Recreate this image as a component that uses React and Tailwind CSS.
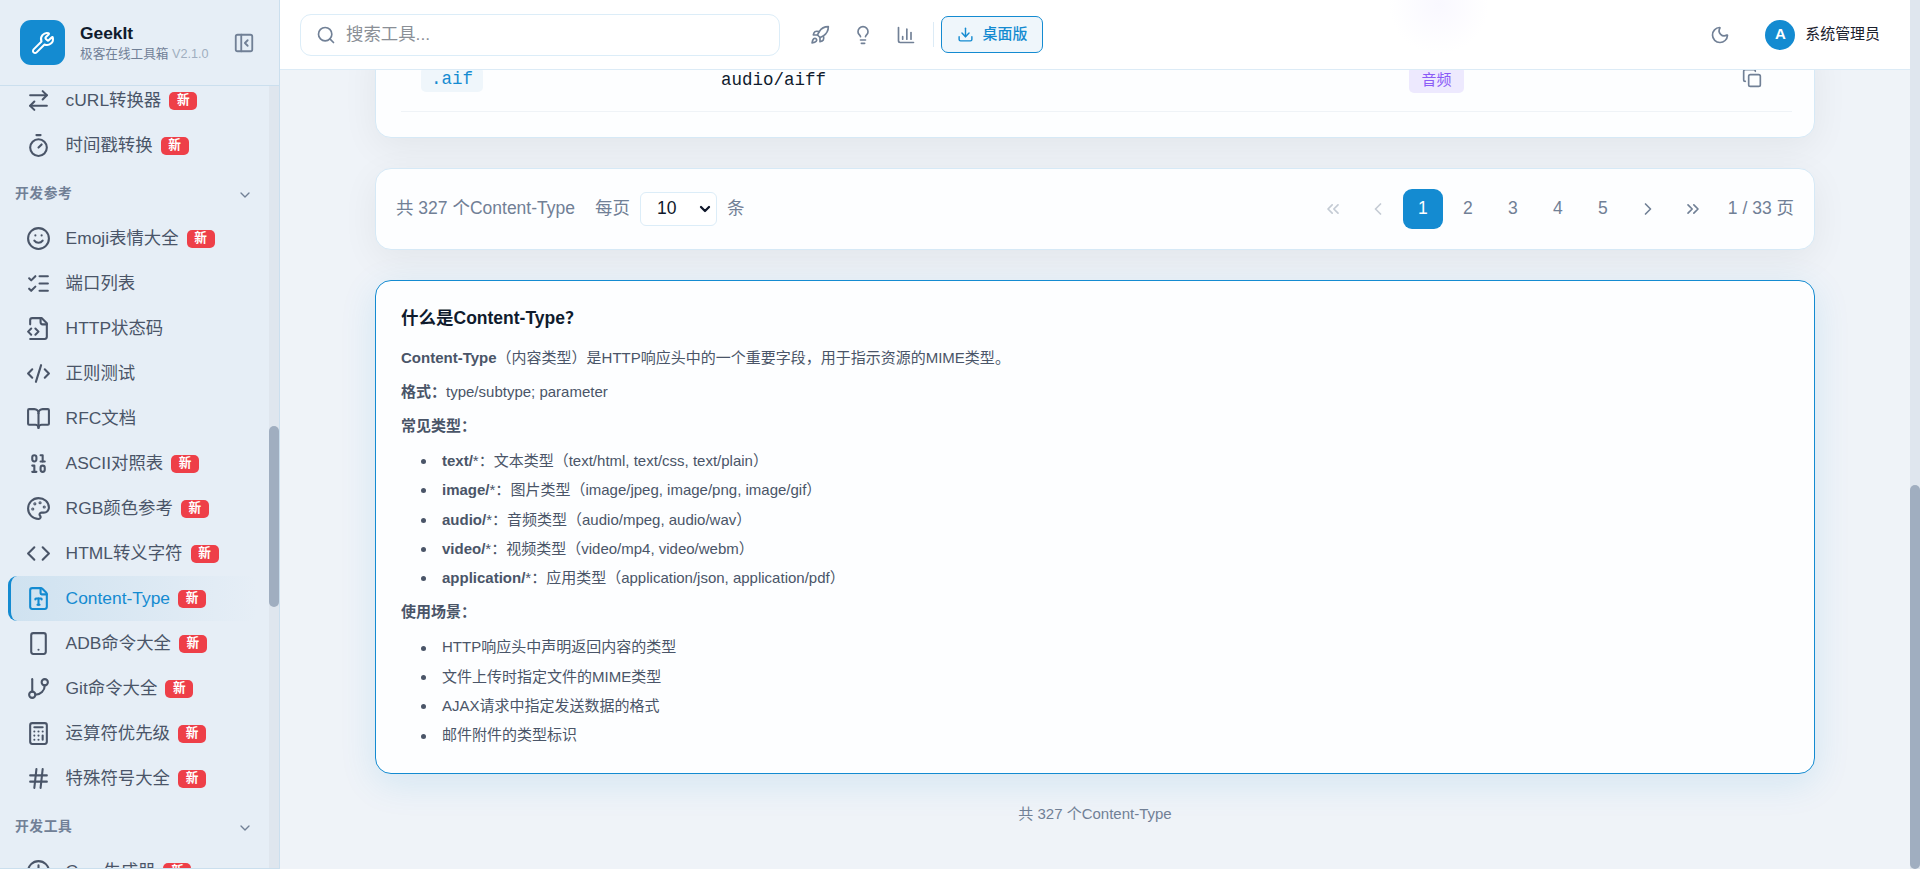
import React from 'react';
import {
    ArrowRightLeft,
    Binary,
    BookOpen,
    Calculator,
    ChartColumn,
    ChevronDown,
    ChevronLeft,
    ChevronRight,
    ChevronsLeft,
    ChevronsRight,
    Clock,
    Code,
    CodeXml,
    Copy,
    Download,
    FileType,
    GitBranch,
    Hash,
    Lightbulb,
    ListChecks,
    Moon,
    Palette,
    Rocket,
    Search,
    Smartphone,
    Smile,
    Timer,
    Wrench,
} from 'lucide-react';

const FileCodeIcon = (props) => (
    <svg viewBox="0 0 24 24" fill="none" stroke="currentColor" strokeWidth="2" strokeLinecap="round" strokeLinejoin="round" {...props}>
        <path d="M4 22h14a2 2 0 0 0 2-2V7l-5-5H6a2 2 0 0 0-2 2v4" />
        <path d="M14 2v4a2 2 0 0 0 2 2h4" />
        <path d="m5 12-3 3 3 3" />
        <path d="m9 18 3-3-3-3" />
    </svg>
);

const SidebarIcon = (props) => (
    <svg viewBox="0 0 24 24" fill="none" stroke="currentColor" strokeWidth="2" strokeLinecap="round" strokeLinejoin="round" {...props}>
        <rect x="3" y="3" width="18" height="18" rx="2" />
        <path d="M9 3v18" />
        <path d="m16 15-3-3 3-3" />
    </svg>
);

const sections = [
    {
        title: null,
        items: [
            { name: 'cURL转换器', icon: ArrowRightLeft, isNew: true },
            { name: '时间戳转换', icon: Timer, isNew: true },
        ],
    },
    {
        title: '开发参考',
        items: [
            { name: 'Emoji表情大全', icon: Smile, isNew: true },
            { name: '端口列表', icon: ListChecks },
            { name: 'HTTP状态码', icon: FileCodeIcon },
            { name: '正则测试', icon: CodeXml },
            { name: 'RFC文档', icon: BookOpen },
            { name: 'ASCII对照表', icon: Binary, isNew: true },
            { name: 'RGB颜色参考', icon: Palette, isNew: true },
            { name: 'HTML转义字符', icon: Code, isNew: true },
            { name: 'Content-Type', icon: FileType, isNew: true, active: true },
            { name: 'ADB命令大全', icon: Smartphone, isNew: true },
            { name: 'Git命令大全', icon: GitBranch, isNew: true },
            { name: '运算符优先级', icon: Calculator, isNew: true },
            { name: '特殊符号大全', icon: Hash, isNew: true },
        ],
    },
    {
        title: '开发工具',
        items: [{ name: 'Cron生成器', icon: Clock, isNew: true }],
    },
];

const commonTypes = [
    { type: 'text/', desc: '文本类型（text/html, text/css, text/plain）' },
    { type: 'image/', desc: '图片类型（image/jpeg, image/png, image/gif）' },
    { type: 'audio/', desc: '音频类型（audio/mpeg, audio/wav）' },
    { type: 'video/', desc: '视频类型（video/mp4, video/webm）' },
    { type: 'application/', desc: '应用类型（application/json, application/pdf）' },
];

const scenes = [
    'HTTP响应头中声明返回内容的类型',
    '文件上传时指定文件的MIME类型',
    'AJAX请求中指定发送数据的格式',
    '邮件附件的类型标识',
];

const NavItem = ({ item }) => {
    const Icon = item.icon;

    return (
        <a
            className={
                item.active
                    ? 'ml-2 mr-3 flex h-[45px] items-center rounded-[9px] border-l-[3px] border-[#148bd1] bg-linear-to-r from-[#cfe2f0] to-[#e6eef6] pl-[15px] text-[#148bd1]'
                    : 'ml-2 mr-3 flex h-[45px] items-center border-l-[3px] border-transparent pl-[15px] text-[#4a5568]'
            }
        >
            <Icon className="h-[25px] w-[25px] shrink-0" />
            <span className="ml-[14.6px] pb-[2px] text-[17.4px] leading-6">{item.name}</span>
            {item.isNew && (
                <span className="ml-2 flex h-[18px] w-[28px] items-center justify-center rounded-[5px] bg-[#ee3f48] text-[12.65px] font-bold text-white">
                    新
                </span>
            )}
        </a>
    );
};

const Sidebar = () => (
    <aside className="flex h-full w-[280px] shrink-0 flex-col border-r border-b border-[#cbdfee] bg-[#e6eef6]">
        <div className="flex h-[86px] shrink-0 items-center border-b border-[#cbdfee] pl-5">
            <div className="flex h-[45px] w-[45px] items-center justify-center rounded-[11px] bg-[#148bd1]">
                <Wrench className="h-6 w-6 text-white" />
            </div>
            <div className="ml-[15px] flex w-[148px] flex-col pt-[2px]">
                <span className="text-[17.4px] leading-[21px] font-bold text-[#0f1b2d]">GeekIt</span>
                <span className="text-[12.65px] leading-[21px] whitespace-nowrap text-[#718096]">
                    极客在线工具箱 <span className="text-[#a0aec0]">V2.1.0</span>
                </span>
            </div>
            <SidebarIcon className="ml-[5px] h-[22px] w-[22px] text-[#718096]" />
        </div>
        <div className="flex min-h-0 flex-1">
            <nav className="min-w-0 flex-1 overflow-hidden">
                <div className="-mt-2">
                    {sections.map((section, index) => (
                        <div key={index}>
                            {section.title && (
                                <div className="flex h-12 items-center justify-between pt-[5px] pr-[16px] pl-[15px] text-[#718096]">
                                    <span className="text-[13.8px] font-semibold tracking-[0.575px]">{section.title}</span>
                                    <ChevronDown className="h-4 w-4" />
                                </div>
                            )}
                            {section.items.map((item) => (
                                <NavItem key={item.name} item={item} />
                            ))}
                        </div>
                    ))}
                </div>
            </nav>
            <div className="w-[10px] bg-[#dfe6ee] pt-[340px]">
                <div className="h-[181px] rounded-full bg-[#a0aec0]" />
            </div>
        </div>
    </aside>
);

const Header = () => (
    <header className="relative z-10 flex h-[70px] shrink-0 items-center border-b border-[#dcebf6] bg-white bg-[radial-gradient(circle_at_1159px_4px,#f9f8ff_0,#ffffff_50px)] pr-[30px] pl-5">
        <div className="flex h-[42px] w-[480px] items-center rounded-[11px] border border-[#dcedf8] bg-white pl-[15px]">
            <Search className="h-5 w-5 text-[#718096]" />
            <span className="ml-[10px] pb-[2px] text-[17.4px] leading-6 text-[#8a8f96]">搜索工具...</span>
        </div>
        <div className="ml-[30px] flex items-center gap-[23px] text-[#718096]">
            <Rocket className="h-5 w-5" />
            <Lightbulb className="h-5 w-5" />
            <ChartColumn className="h-5 w-5" />
        </div>
        <div className="ml-[17px] h-[25px] w-px bg-[#dcebf6]" />
        <button className="ml-[7px] flex h-[37px] w-[102px] items-center justify-center gap-[9px] rounded-[7px] border border-[#148bd1] bg-[#eff6fb] text-[#148bd1]">
            <Download className="h-[17px] w-[17px]" />
            <span className="text-[14.95px] font-medium">桌面版</span>
        </button>
        <Moon className="ml-auto h-5 w-5 text-[#718096]" />
        <div className="ml-[35px] flex h-[30px] w-[30px] items-center justify-center rounded-full bg-[#148bd1] text-[15px] font-semibold text-white">
            A
        </div>
        <span className="ml-[10px] text-[14.95px] text-[#1a202c]">系统管理员</span>
    </header>
);

const Pagination = () => (
    <div className="mt-[30px] flex h-[82px] shrink-0 items-center justify-between rounded-2xl border border-[#d6e9f6] bg-[#fdfeff] pr-5 pb-px pl-5 text-[17.5px] text-[#718096] shadow-[0_9px_37px_rgba(0,0,0,0.06)]">
        <div className="flex items-center">
            <span>共 327 个Content-Type</span>
            <span className="ml-5">每页</span>
            <div className="mx-[10px] flex h-[34px] w-[77px] items-center justify-between rounded-md border border-[#dcedf8] bg-white pr-[3px] pl-4 text-[#0f172a]">
                <span>10</span>
                <ChevronDown className="h-4 w-4" strokeWidth={3.4} />
            </div>
            <span>条</span>
        </div>
        <div className="flex items-center gap-[5px]">
            <button className="flex h-10 w-10 items-center justify-center opacity-40">
                <ChevronsLeft className="h-5 w-5" />
            </button>
            <button className="flex h-10 w-10 items-center justify-center opacity-40">
                <ChevronLeft className="h-5 w-5" />
            </button>
            <button className="flex h-10 w-10 items-center justify-center rounded-[9px] bg-[#148bd1] text-white">1</button>
            {[2, 3, 4, 5].map((page) => (
                <button key={page} className="flex h-10 w-10 items-center justify-center">
                    {page}
                </button>
            ))}
            <button className="flex h-10 w-10 items-center justify-center">
                <ChevronRight className="h-5 w-5" />
            </button>
            <button className="flex h-10 w-10 items-center justify-center">
                <ChevronsRight className="h-5 w-5" />
            </button>
            <span className="ml-[10px]">1 / 33 页</span>
        </div>
    </div>
);

const BulletItem = ({ children }) => (
    <li className="flex items-center leading-[29.3px]">
        <span className="mt-[2px] mr-4 h-[5px] w-[5px] rounded-full bg-[#4a5568]" />
        <span>{children}</span>
    </li>
);

const InfoCard = () => (
    <section className="mt-[30px] h-[494px] shrink-0 rounded-2xl border border-[#148bd1] bg-[#fdfeff] px-[25px] pt-[25px] text-[15px] text-[#4a5568] shadow-[0_9px_37px_rgba(20,139,209,0.12)]">
        <h3 className="text-[17.5px] leading-[25px] font-semibold text-[#0f1b2d]">什么是Content-Type？</h3>
        <p className="mt-[13px] leading-[27px]">
            <strong>Content-Type</strong>（内容类型）是HTTP响应头中的一个重要字段，用于指示资源的MIME类型。
        </p>
        <p className="mt-[7px] leading-[27px]">
            <strong>格式：</strong>type/subtype; parameter
        </p>
        <p className="mt-[7px] leading-[27px]">
            <strong>常见类型：</strong>
        </p>
        <ul className="mt-[7px] pl-5">
            {commonTypes.map((item) => (
                <BulletItem key={item.type}>
                    <strong>{item.type}</strong>*：{item.desc}
                </BulletItem>
            ))}
        </ul>
        <p className="mt-[6px] leading-[27px]">
            <strong>使用场景：</strong>
        </p>
        <ul className="mt-[7px] pl-5">
            {scenes.map((scene) => (
                <BulletItem key={scene}>{scene}</BulletItem>
            ))}
        </ul>
    </section>
);

const App = () => {
    return (
        <div className="flex h-[869px] w-[1920px] overflow-hidden bg-[#eff3f8] font-['Liberation_Sans','Noto_Sans_CJK_SC',sans-serif]">
            <Sidebar />
            <div className="flex min-w-0 flex-1 flex-col">
                <Header />
                <main className="-mt-[30px] flex min-h-0 flex-1 flex-col overflow-hidden pr-[95px] pl-[95px]">
                    <div className="h-[98px] shrink-0 rounded-b-2xl border border-[#d6e9f6] bg-[#fdfeff] pr-[22px] pl-[25px] shadow-[0_9px_37px_rgba(0,0,0,0.06)]">
                        <div className="flex h-[71px] items-center border-b border-[#eff3f7] pt-[7px] pl-5 font-['Liberation_Mono',monospace] text-[17.5px]">
                            <div className="w-[300px]">
                                <span className="inline-flex h-[25px] items-center rounded-[5px] bg-[#eff6fb] px-[10px] pt-px text-[#148bd1]">.aif</span>
                            </div>
                            <span className="w-[688px] pt-px text-[#0f1b2d]">audio/aiff</span>
                            <span className="inline-flex h-[27px] w-[55px] items-center justify-center rounded-[5px] bg-[#ede9fe] pt-px font-['Liberation_Sans','Noto_Sans_CJK_SC',sans-serif] text-[14.95px] text-[#8b5cf6]">
                                音频
                            </span>
                            <Copy className="mb-[3px] ml-[278px] h-5 w-5 text-[#718096]" />
                        </div>
                    </div>
                    <Pagination />
                    <InfoCard />
                    <p className="mt-[28px] text-center text-[15px] leading-6 text-[#718096]">共 327 个Content-Type</p>
                </main>
            </div>
            <div className="flex w-[10px] shrink-0 flex-col bg-[#dfe6ee] pt-[485px]">
                <div className="h-[384px] rounded-full bg-[#a0aec0]" />
            </div>
        </div>
    );
};

export default App;
